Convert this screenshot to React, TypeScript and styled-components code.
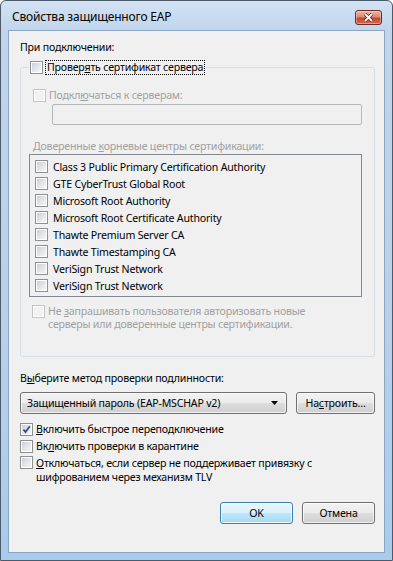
import React from 'react';
import styled, { createGlobalStyle, css } from 'styled-components';

const GlobalStyle = createGlobalStyle`
  html, body {
    margin: 0;
    padding: 0;
    background: #ffffff;
  }
  body {
    font-family: 'Noto Sans', 'Open Sans', sans-serif;
    font-size: 10.6px;
    color: #000;
  }
`;

const FONT = `'Noto Sans', 'Open Sans', sans-serif`;

// окно
const Window = styled.div`
  width: 393px;
  height: 561px;
  box-sizing: border-box;
  border: 1px solid #4d5a6a;
  border-radius: 6px 6px 0 0;
  background: linear-gradient(180deg, #d3e2f3 0px, #c0d5ec 30px, #b8d0ea 60%, #a9cbec 100%);
  display: flex;
  flex-direction: column;
  font-family: ${FONT};
  font-size: 10.6px;
  letter-spacing: -0.2px;
  overflow: hidden;
`;

const TitleBar = styled.div`
  height: 29px;
  display: flex;
  align-items: center;
  justify-content: space-between;
  padding: 0 10px 0 11px;
  flex-shrink: 0;
`;

const Title = styled.div`
  font-size: 12px;
  color: #000;
  padding-top: 1px;
`;

const CloseButton = styled.div`
  width: 27px;
  height: 15px;
  margin-top: 4px;
  box-sizing: border-box;
  border: 1px solid #6e2a22;
  border-radius: 3px;
  background: linear-gradient(180deg, #eab3a6 0%, #dc8a76 45%, #c5452c 55%, #d36a4f 100%);
  display: flex;
  align-items: center;
  justify-content: center;
  box-shadow: inset 0 0 0 1px rgba(255, 255, 255, 0.35);
`;

const Client = styled.div`
  flex: 1;
  margin: 0 7px 7px 7px;
  background: #f0f0f0;
  border: 1px solid #8ba6c3;
  padding: 9px 9px 0 11px;
  display: flex;
  flex-direction: column;
`;

const Label = styled.div<{ $disabled?: boolean }>`
  color: ${p => (p.$disabled ? '#a0a0a0' : '#000')};
  line-height: 14px;
  white-space: nowrap;
`;

// чекбокс Win7
const Box = styled.span<{ $disabled?: boolean }>`
  position: relative;
  width: 13px;
  height: 13px;
  box-sizing: border-box;
  flex-shrink: 0;
  border: 1px solid ${p => (p.$disabled ? '#c4c4c4' : '#8e8f8f')};
  background: #fff;
  display: inline-block;
  &::after {
    content: '';
    position: absolute;
    left: 1px;
    top: 1px;
    width: 9px;
    height: 9px;
    ${p =>
      p.$disabled
        ? css`background: #f2f2f2;`
        : css`background: linear-gradient(135deg, #cbcfd5 0%, #e6e8eb 60%, #f6f6f6 100%);`}
  }
`;

const CheckMark = styled.svg`
  position: absolute;
  left: 1px;
  top: 1px;
  z-index: 1;
`;

const Check = ({ disabled, checked }: { disabled?: boolean; checked?: boolean }) => (
  <Box $disabled={disabled}>
    {checked && (
      <CheckMark width="9" height="9" viewBox="0 0 9 9">
        <path d="M1.5 4.5 L3.5 7 L7.8 1.2" fill="none" stroke="#2e4b8b" strokeWidth="1.7" />
      </CheckMark>
    )}
  </Box>
);

const CheckRow = styled.div<{ $gap?: number; $top?: string }>`
  display: flex;
  align-items: ${p => p.$top || 'center'};
  gap: ${p => p.$gap ?? 3}px;
`;

const Focus = styled.span`
  outline: 1px dotted #000;
  outline-offset: 0;
  padding: 0 1px;
  line-height: 13px;
`;

const Group = styled.fieldset`
  margin: 7px 0 0 0;
  padding: 14px 12px 0 12px;
  border: 1px solid #d5dfe5;
  border-radius: 3px;
  height: 296px;
  box-sizing: border-box;
  min-width: 0;
`;

const Legend = styled.legend`
  padding: 0 2px 0 1px;
  margin-left: -4px;
  display: flex;
  align-items: center;
  gap: 3px;
`;

const Input = styled.div`
  margin: 2px 0 0 19px;
  height: 21px;
  box-sizing: border-box;
  border: 1px solid #b5b8bb;
  border-radius: 2px;
  background: #f0f0f0;
`;

const ListCaption = styled(Label)`
  margin-top: 14px;
`;

const List = styled.div`
  margin: 1px 0 0 -4px;
  width: 333px;
  height: 143px;
  box-sizing: border-box;
  border: 1px solid #828790;
  background: #f0f0f0;
  padding: 3px 0 0 5px;
  display: flex;
  flex-direction: column;
`;

const ListItem = styled.div`
  height: 17px;
  display: flex;
  align-items: center;
  gap: 5px;
`;

const NoteRow = styled(CheckRow)`
  margin: 8px 0 0 -1px;
`;

const NoteText = styled(Label)`
  white-space: normal;
  line-height: 13px;
`;

const MethodCaption = styled(Label)`
  margin-top: 14px;
`;

const ComboRow = styled.div`
  margin-top: 7px;
  display: flex;
  gap: 9px;
`;

const buttonFace = css`
  box-sizing: border-box;
  height: 22px;
  border: 1px solid #707070;
  border-radius: 3px;
  background: linear-gradient(180deg, #f2f2f2 0%, #ebebeb 50%, #dddddd 51%, #cfcfcf 100%);
  box-shadow: inset 0 0 0 1px rgba(255, 255, 255, 0.7);
  display: flex;
  align-items: center;
  font-family: ${FONT};
  font-size: 10.6px;
  color: #000;
`;

const Combo = styled.div`
  ${buttonFace};
  width: 267px;
  padding: 0 8px 0 6px;
  justify-content: space-between;
`;

const Button = styled.div<{ $default?: boolean; $width?: number }>`
  ${buttonFace};
  width: ${p => p.$width ?? 73}px;
  justify-content: center;
  ${p =>
    p.$default &&
    css`
      border-color: #3c7fb1;
      background: linear-gradient(180deg, #eaf6fd 0%, #d9f0fc 50%, #bee6fd 51%, #a7d9f5 100%);
      box-shadow: inset 0 0 0 1px rgba(255, 255, 255, 0.8);
    `}
`;

const Options = styled.div`
  margin-top: 8px;
  display: flex;
  flex-direction: column;
  gap: 3px;
`;

const OptText = styled(Label)`
  line-height: 14px;
`;

const Footer = styled.div`
  margin-top: auto;
  margin-bottom: 28px;
  display: flex;
  justify-content: flex-end;
  gap: 9px;
`;

const U = styled.u`
  text-decoration: underline;
`;

const certs = [
  'Class 3 Public Primary Certification Authority',
  'GTE CyberTrust Global Root',
  'Microsoft Root Authority',
  'Microsoft Root Certificate Authority',
  'Thawte Premium Server CA',
  'Thawte Timestamping CA',
  'VeriSign Trust Network',
  'VeriSign Trust Network',
];

export default function App() {
  return (
    <>
      <GlobalStyle />
      <Window>
        <TitleBar>
          <Title>Свойства защищенного EAP</Title>
          <CloseButton>
            <svg width="11" height="9" viewBox="0 0 11 9">
              <path d="M2 1 L9 8 M9 1 L2 8" stroke="#5a1a12" strokeWidth="3.2" />
              <path d="M2 1 L9 8 M9 1 L2 8" stroke="#ffffff" strokeWidth="1.8" />
            </svg>
          </CloseButton>
        </TitleBar>
        <Client>
          <Label>При подключении:</Label>
          <Group>
            <Legend>
              <Check />
              <Focus>
                Провер<U>я</U>ть сертификат сервера
              </Focus>
            </Legend>
            <CheckRow>
              <Check disabled />
              <Label $disabled>
                Подкл<U>ю</U>чаться к серверам:
              </Label>
            </CheckRow>
            <Input />
            <ListCaption $disabled>
              Доверенные <U>к</U>орневые центры сертификации:
            </ListCaption>
            <List>
              {certs.map((c, i) => (
                <ListItem key={i}>
                  <Check />
                  <Label>{c}</Label>
                </ListItem>
              ))}
            </List>
            <NoteRow $top="flex-start">
              <Check disabled />
              <NoteText $disabled>
                Не <U>з</U>апрашивать пользователя авторизовать новые
                <br />
                серверы или доверенные центры сертификации.
              </NoteText>
            </NoteRow>
          </Group>
          <MethodCaption>
            В<U>ы</U>берите метод проверки подлинности:
          </MethodCaption>
          <ComboRow>
            <Combo>
              <span>Защищенный пароль (EAP-MSCHAP v2)</span>
              <svg width="7" height="4" viewBox="0 0 7 4">
                <path d="M0 0 H7 L3.5 4 Z" fill="#000" />
              </svg>
            </Combo>
            <Button $width={79}>
              На<U>с</U>троить...
            </Button>
          </ComboRow>
          <Options>
            <CheckRow>
              <Check checked />
              <OptText>
                <U>В</U>ключить быстрое переподключение
              </OptText>
            </CheckRow>
            <CheckRow>
              <Check />
              <OptText>
                Вк<U>л</U>ючить проверки в карантине
              </OptText>
            </CheckRow>
            <CheckRow $top="flex-start">
              <Check />
              <OptText>
                <U>О</U>тключаться, если сервер не поддерживает привязку с
                <br />
                шифрованием через механизм TLV
              </OptText>
            </CheckRow>
          </Options>
          <Footer>
            <Button $default>OK</Button>
            <Button>Отмена</Button>
          </Footer>
        </Client>
      </Window>
    </>
  );
}
